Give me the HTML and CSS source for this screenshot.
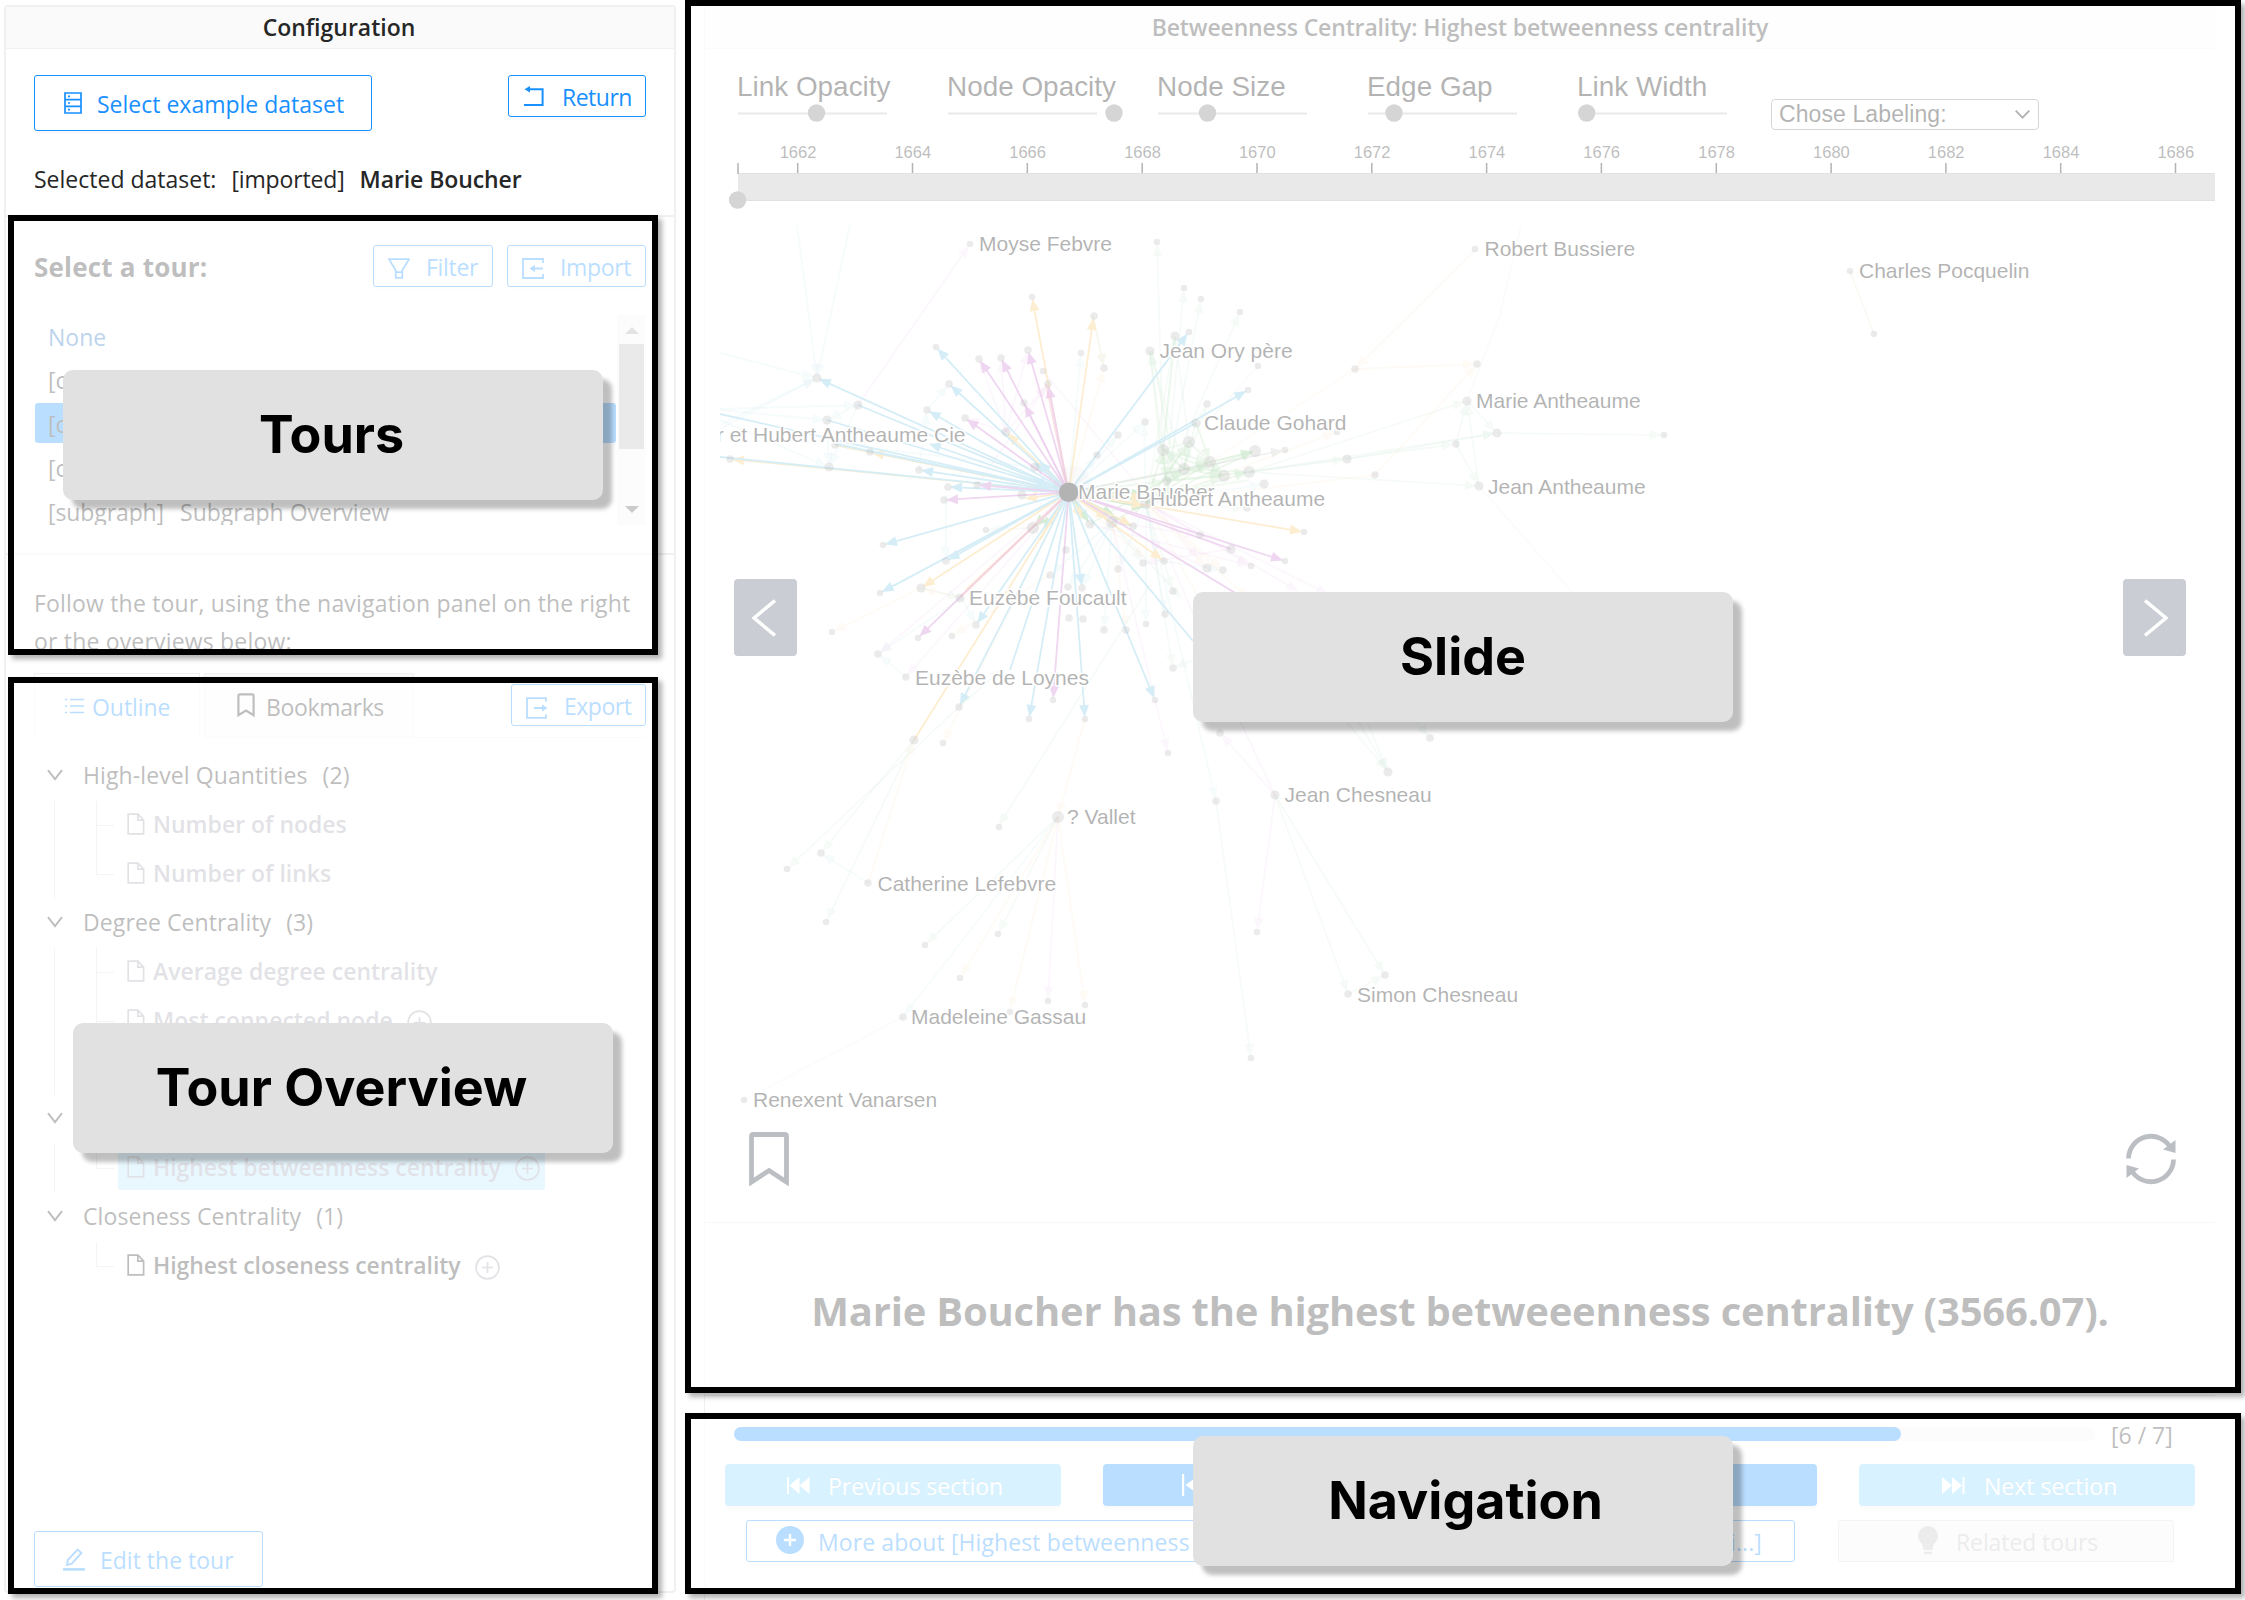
FILE: index.html
```html
<!DOCTYPE html>
<html lang="en">
<head>
<meta charset="utf-8">
<title>Network tour</title>
<link rel="stylesheet" href="styles.css">
</head>
<body>
<svg class="defs" width="0" height="0">
  <symbol id="i-file" viewBox="0 0 18 22"><path d="M1.2 1.2H11L16.6 7V20.8H1.2ZM10.8 1.5V7.2H16.4" fill="none" stroke="currentColor" stroke-width="1.7"/></symbol>
  <symbol id="i-plus" viewBox="0 0 25 25"><g fill="none" stroke="currentColor"><circle cx="12.5" cy="12.5" r="11.4" stroke-width="1.7"/><path d="M12.5 7V18M7 12.5H18" stroke-width="1.7"/></g></symbol>
  <symbol id="i-chev" viewBox="0 0 16 12"><path d="M1 1.2L8 10.2L15 1.2" fill="none" stroke="currentColor" stroke-width="1.9"/></symbol>
  <symbol id="i-mark" viewBox="0 0 18 24"><path d="M1.4 22.2V2.8Q1.4 1.4 2.8 1.4H15.2Q16.6 1.4 16.6 2.8V22.2L9 17.6Z" fill="none" stroke="currentColor" stroke-width="2.2"/></symbol>
</svg>
<div class="app">
  <aside class="side">
    <header class="bar">Configuration</header>
    <section class="dataset">
      <div class="row top">
        <button class="btn big"><svg width="18" height="22" viewBox="0 0 18 22"><path d="M1 1H17V21H1ZM1 7.6H17M1 14.3H17M4 4.4H6M4 11H6M4 17.6H6" fill="none" stroke="currentColor" stroke-width="1.7"/></svg><span class="sel">Select example dataset</span></button>
        <button class="btn return"><svg width="20" height="21" viewBox="0 0 20 21"><path d="M4 3.2H18.6V19H0" fill="none" stroke="currentColor" stroke-width="2"/><path d="M0.5 3.2L6 0V6.4Z" fill="currentColor"/></svg><span>Return</span></button>
      </div>
      <p class="current"><span>Selected dataset:</span><span class="kind">[imported]</span><b>Marie Boucher</b></p>
    </section>
    <section class="tours">
      <div class="row">
        <h2>Select a tour:</h2>
        <div class="pair">
          <button class="btn filter"><svg width="22" height="21" viewBox="0 0 22 21"><path d="M1 1.2H21L14.3 12.3V19.8H7.7V12.3ZM7.7 14.2H14.3" fill="none" stroke="currentColor" stroke-width="1.8"/></svg><span>Filter</span></button>
          <button class="btn import"><svg width="22" height="21" viewBox="0 0 22 21"><path d="M21 5V1H1V20H21V16M9 10.5H21" fill="none" stroke="currentColor" stroke-width="1.8"/><path d="M7.5 10.5L13 6.8V14.2Z" fill="currentColor"/></svg><span>Import</span></button>
        </div>
      </div>
      <div class="list">
        <ul>
          <li class="none">None</li>
          <li><span>[c</span></li>
          <li class="on"><span>[c</span></li>
          <li><span>[c</span></li>
          <li><span class="sub">[subgraph]</span><span>Subgraph Overview</span></li>
        </ul>
        <div class="scroll"><i class="up"></i><i class="thumb"></i><i class="down"></i></div>
      </div>
    </section>
    <section class="overview">
      <p>Follow the tour, using the navigation panel on the right<br>or the overviews below:</p>
      <nav class="tabs">
        <div class="tab active"><svg width="19" height="16" viewBox="0 0 19 16"><path d="M0 1.5H2M0 8H2M0 14.5H2M5 1.5H19M5 8H19M5 14.5H19" stroke="currentColor" stroke-width="1.7"/></svg><span>Outline</span></div>
        <div class="tab marks"><svg width="18" height="24"><use href="#i-mark"/></svg><span>Bookmarks</span></div>
        <div class="rest"><button class="btn export"><svg width="22" height="22" viewBox="0 0 22 22"><path d="M20 4.5V1.2H1V20.8H20V17.5M8 11H17" fill="none" stroke="currentColor" stroke-width="1.8"/><path d="M21.5 11L16 7.4V14.6Z" fill="currentColor"/></svg><span>Export</span></button></div>
      </nav>
      <div class="tree">
        <div class="group"><svg width="16" height="12"><use href="#i-chev"/></svg><span>High-level Quantities</span><span>(2)</span></div>
        <div class="kids">
          <div class="leaf"><svg width="18" height="22"><use href="#i-file"/></svg><span>Number of nodes</span></div>
          <div class="leaf last"><svg width="18" height="22"><use href="#i-file"/></svg><span>Number of links</span></div>
        </div>
        <div class="group"><svg width="16" height="12"><use href="#i-chev"/></svg><span>Degree Centrality</span><span>(3)</span></div>
        <div class="kids">
          <div class="leaf"><svg width="18" height="22"><use href="#i-file"/></svg><span>Average degree centrality</span></div>
          <div class="leaf"><svg width="18" height="22"><use href="#i-file"/></svg><span>Most connected node</span><svg class="more" width="25" height="25"><use href="#i-plus"/></svg></div>
          <div class="leaf last"><svg width="18" height="22"><use href="#i-file"/></svg></div>
        </div>
        <div class="group"><svg width="16" height="12"><use href="#i-chev"/></svg></div>
        <div class="kids">
          <div class="leaf last"><div class="hit"><svg width="18" height="22"><use href="#i-file"/></svg><span>Highest betweenness centrality</span><svg class="more" width="25" height="25"><use href="#i-plus"/></svg></div></div>
        </div>
        <div class="group"><svg width="16" height="12"><use href="#i-chev"/></svg><span>Closeness Centrality</span><span>(1)</span></div>
        <div class="kids end">
          <div class="leaf last fresh"><svg width="18" height="22"><use href="#i-file"/></svg><span>Highest closeness centrality</span><svg class="more" width="25" height="25"><use href="#i-plus"/></svg></div>
        </div>
      </div>
      <button class="btn edit"><svg width="22" height="23" viewBox="0 0 22 23"><path d="M4 17L4.8 12L14.6 1.6L18.4 5L8.8 15.6Z" fill="none" stroke="currentColor" stroke-width="1.9"/><path d="M0 21.4H22" stroke="currentColor" stroke-width="2.6"/></svg><span>Edit the tour</span></button>
    </section>
  </aside>

  <main class="main">
    <header class="bar wide">Betweenness Centrality: Highest betweenness centrality</header>
    <div class="controls">
      <label class="slider"><span>Link Opacity</span><svg width="180" height="18"><path d="M0 9.5H149" class="track"/><circle cx="78.5" cy="9" r="8.7"/></svg></label>
      <label class="slider"><span>Node Opacity</span><svg width="180" height="18"><path d="M0 9.5H149" class="track"/><circle cx="166" cy="9" r="8.7"/></svg></label>
      <label class="slider"><span>Node Size</span><svg width="180" height="18"><path d="M0 9.5H149" class="track"/><circle cx="49.5" cy="9" r="8.7"/></svg></label>
      <label class="slider"><span>Edge Gap</span><svg width="180" height="18"><path d="M0 9.5H149" class="track"/><circle cx="26" cy="9" r="8.7"/></svg></label>
      <label class="slider"><span>Link Width</span><svg width="180" height="18"><path d="M0 9.5H149" class="track"/><circle cx="8.7" cy="9" r="8.7"/></svg></label>
      <div class="select"><span>Chose Labeling:</span><svg width="15" height="9" viewBox="0 0 15 9"><path d="M0.7 0.7L7.5 7.6L14.3 0.7" fill="none" stroke="#000" stroke-width="1.9"/></svg></div>
    </div>
    <svg class="timeline" width="1510" height="72" viewBox="705 140 1510 72">
      <rect x="738" y="174" width="1477" height="26"/>
      <path class="ends" d="M738 173.5H2215M738 200.5H2215"/>
      <g id="ticks"></g>
      <circle cx="737.6" cy="200" r="8.7"/>
    </svg>
    <div class="stage">
      <svg class="graph" width="1510" height="1010" viewBox="705 212 1510 1010">
        <defs><clipPath id="area"><rect x="720" y="225" width="1495" height="990"/></clipPath></defs>
        <g clip-path="url(#area)">
          <g id="edges"></g>
          <g id="nodes"></g>
          <g class="names">
            <text x="979" y="251">Moyse Febvre</text>
            <text x="1484.500" y="256">Robert Bussiere</text>
            <text x="1859" y="278">Charles Pocquelin</text>
            <text x="1159.500" y="358">Jean Ory père</text>
            <text x="1204" y="430">Claude Gohard</text>
            <text x="1476" y="408">Marie Antheaume</text>
            <text x="1488" y="494">Jean Antheaume</text>
            <text x="965.500" y="441.500" text-anchor="end">Marie Boucher et Hubert Antheaume Cie</text>
            <text x="1078" y="498.700">Marie Boucher</text>
            <text x="1150" y="506">Hubert Antheaume</text>
            <text x="969" y="605">Euzèbe Foucault</text>
            <text x="915" y="685">Euzèbe de Loynes</text>
            <text x="1067" y="824">? Vallet</text>
            <text x="877.500" y="891">Catherine Lefebvre</text>
            <text x="911" y="1024">Madeleine Gassau</text>
            <text x="753" y="1107">Renexent Vanarsen</text>
            <text x="1284.500" y="801.500">Jean Chesneau</text>
            <text x="1357" y="1002">Simon Chesneau</text>
          </g>
        </g>
      </svg>
      <button class="flip prev"><svg width="24" height="38" viewBox="0 0 24 38"><path d="M23 1.5L2 19L23 36.500" fill="none" stroke="#fff" stroke-width="3.500"/></svg></button>
      <button class="flip next"><svg width="24" height="38" viewBox="0 0 24 38"><path d="M1 1.5L22 19L1 36.500" fill="none" stroke="#fff" stroke-width="3.500"/></svg></button>
      <svg class="pin" width="40" height="54" viewBox="0 0 40 54"><path d="M2.500 50V4.500Q2.500 2.500 4.500 2.500H35.500Q37.500 2.500 37.500 4.500V50L20 38.500Z" fill="none" stroke="currentColor" stroke-width="4.800"/></svg>
      <svg class="sync" width="52" height="52" viewBox="0 0 52 52"><g fill="none" stroke="currentColor" stroke-width="4.800"><path d="M3.500 25.500A22.500 22.500 0 0 1 46 15.500"/><path d="M48.500 26.500A22.500 22.500 0 0 1 6 36.500"/></g><path d="M50.500 7V20L38 16.500ZM1.500 45V32L14 35.500Z" fill="currentColor"/></svg>
    </div>
    <div class="caption">Marie Boucher has the highest betweeenness centrality (3566.07).</div>
    <footer class="nav">
      <div class="progress"><div class="rail"><div class="fill"></div></div><span>[6 / 7]</span></div>
      <div class="steps">
        <button class="step light"><svg width="23" height="17" viewBox="0 0 23 17"><path d="M0 0H2V17H0ZM12.500 0V17L2.500 8.500ZM22.500 0V17L12.500 8.500Z" fill="#fff"/></svg><span>Previous section</span></button>
        <button class="step back"><svg width="23" height="22" viewBox="0 0 23 22"><path d="M0 0H2.200V22H0ZM16 2V20L3.500 11Z" fill="#fff"/></svg></button>
        <button class="step"></button>
        <button class="step light"><svg width="23" height="17" viewBox="0 0 23 17"><path d="M22.500 0H20.500V17H22.500ZM0 0V17L10 8.500ZM10 0V17L20 8.500Z" fill="#fff"/></svg><span>Next section</span></button>
      </div>
      <div class="extra">
        <button class="btn about"><svg width="28" height="28" viewBox="0 0 28 28"><circle cx="14" cy="14" r="14" fill="currentColor"/><path d="M14 8V20M8 14H20" stroke="#fff" stroke-width="2.300"/></svg><span>More about [Highest betweenness</span><span class="tail">i...]</span></button>
        <button class="btn related"><svg width="20" height="28" viewBox="0 0 20 28"><path d="M10 0A10 10 0 0 1 20 10C20 15 15.500 17 15 21V22.500Q15 24 13.500 24H6.500Q5 24 5 22.500V21C4.500 17 0 15 0 10A10 10 0 0 1 10 0ZM6 25.800H14V28H6Z" fill="currentColor"/></svg><span>Related tours</span></button>
      </div>
    </footer>
  </main>

  <div class="frame f-tours"></div>
  <div class="frame f-overview"></div>
  <div class="frame f-slide"></div>
  <div class="frame f-nav"></div>
  <div class="tag t-tours">Tours</div>
  <div class="tag t-overview">Tour Overview</div>
  <div class="tag t-slide">Slide</div>
  <div class="tag t-nav">Navigation</div>
</div>
<script src="graph.js"></script>
</body>
</html>
```
FILE: styles.css
```css
* { box-sizing: border-box; }
body { margin: 0; background: #fff; color: #262626; font: 23px "Open Sans", "Noto Sans", sans-serif; }
svg { display: block; flex: none; }
.defs { position: absolute; }
h2, p, ul { margin: 0; padding: 0; }
button { font: inherit; margin: 0; padding: 0; }
.app { position: relative; width: 2245px; height: 1600px; overflow: hidden; display: grid; grid-template-columns: 672px 1511px; column-gap: 28px; padding: 5px 0 0 4px; }

/* left column */
.side { height: 1588px; border: 2px solid #f0f0f0; border-radius: 4px; }
.bar { height: 42px; line-height: 41px; background: #fafafa; border-bottom: 1px solid #f0f0f0; text-align: center; white-space: nowrap; }
.side .bar { font-weight: 550; font-size: 23px; padding-right: 2px; }
.row { display: flex; justify-content: space-between; align-items: center; }
.row.top { align-items: flex-start; }
.btn { display: flex; align-items: center; height: 42px; background: #fff; border: 1.5px solid #1890ff; border-radius: 3px; color: #1890ff; box-shadow: 0 3px 0 rgba(0,0,0,.02); line-height: 38px; white-space: nowrap; }
.btn span, .step span { padding-top: 2px; }
.dataset { height: 168px; padding: 26px 28px 0; border-bottom: 2px solid #f0f0f0; }
.big { width: 338px; height: 56px; padding-left: 29px; gap: 15px; }
.return { width: 138px; padding-left: 15px; gap: 18px; letter-spacing: -.5px; }
.current { display: flex; line-height: 36px; margin-top: 30px; white-space: nowrap; }
.kind { margin: 0 15px 0 15px; letter-spacing: -.15px; }
.current b { font-weight: 600; letter-spacing: -.08px; }
.tours { height: 338px; padding: 28px 28px 0; border-bottom: 2px solid #f0f0f0; }
h2 { font-size: 26px; font-weight: 700; line-height: 44px; height: 42px; letter-spacing: .2px; }
.pair { display: flex; gap: 14px; }
.filter { width: 120px; padding-left: 14px; gap: 16px; letter-spacing: -.3px; }
.import { width: 139px; padding-left: 14px; gap: 16px; letter-spacing: -.35px; }
.filter svg, .import svg, .export svg { margin-top: 5px; }
.list { display: flex; height: 210px; margin-top: 28px; overflow: hidden; }
.list ul { flex: 1; list-style: none; margin: 0 1px; }
.list li { display: flex; gap: 16px; height: 40px; line-height: 40px; margin-bottom: 4px; padding: 1px 0 0 13px; white-space: nowrap; border-radius: 3px; }
.list .none { color: #206cc0; padding-top: 2px; }
.list .on { background: #1890ff; }
.sub { letter-spacing: -.1px; }
.scroll { width: 29px; background: #f5f5f5; display: flex; flex-direction: column; align-items: center; padding-top: 12px; }
.up { border: 7px solid transparent; border-top: 0; border-bottom: 7px solid #a3a3a3; }
.thumb { width: 25px; height: 105px; margin-top: 10px; background: #b9b9b9; }
.down { border: 7px solid transparent; border-bottom: 0; border-top: 7px solid #505050; margin-top: 57px; }
.overview { padding: 30px 28px 0; }
.overview p { line-height: 37.7px; letter-spacing: .18px; white-space: nowrap; }
.tabs { display: flex; height: 65px; margin-top: 13px; }
.tab { display: flex; align-items: center; flex: none; height: 65px; border: 1px solid #f0f0f0; padding-bottom: 1px; }
.active { width: 166px; border-bottom: 0; padding-left: 30px; gap: 8px; color: #1890ff; font-weight: 500; letter-spacing: -.05px; }
.active span, .marks span { margin-top: 3px; }
.marks { width: 210px; margin-left: 4px; padding-left: 32px; gap: 11px; background: #fafafa; letter-spacing: -.35px; }
.rest { flex: 1; display: flex; justify-content: flex-end; align-items: flex-start; padding-top: 11px; border-bottom: 1px solid #f0f0f0; }
.export { width: 135px; padding-left: 14px; gap: 16px; letter-spacing: -.5px; }
.tree { margin-top: 14px; }
.group { display: flex; align-items: center; height: 49px; padding: 0 0 3px 13px; white-space: nowrap; }
.group svg { margin-right: 20px; color: #262626; }
.group span + span { margin-left: 15px; }
.group span { letter-spacing: .1px; }
.kids { margin-left: 20px; border-left: 1px solid #d9d9d9; }
.kids.end { border-left-color: transparent; }
.leaf { position: relative; display: flex; align-items: center; height: 49px; padding: 0 0 3px 72px; color: #9d9dac; font-weight: 600; letter-spacing: 0; white-space: nowrap; }
.leaf::before { content: ""; position: absolute; left: 41px; top: 0; height: 49px; border-left: 1px solid #d9d9d9; }
.leaf.last::before { height: 25px; }
.leaf::after { content: ""; position: absolute; left: 41px; top: 24px; width: 18px; border-top: 1px solid #d9d9d9; }
.leaf span { margin-left: 8px; }
.leaf .more { margin: 4px 0 0 14px; }
.leaf.fresh { color: #262626; letter-spacing: -.05px; }
.fresh .more { color: #9d9dac; }
.hit { display: flex; align-items: center; flex: none; height: 42px; width: 427px; margin: 3px 0 0 -9px; padding: 0 0 4px 9px; background: #b6e7ff; border-radius: 3px; color: #9a9db0; letter-spacing: -.05px; }
.edit { width: 229px; height: 56px; margin-top: 240px; padding-left: 28px; gap: 15px; }

/* right column */
.main { border-left: 1px solid #f0f0f0; }
.main .bar { margin-top: 2px; width: 1510px; font-weight: 550; font-size: 23px; letter-spacing: -.14px; }
.controls { display: flex; height: 91px; padding: 17px 0 0 33px; font-family: "Liberation Sans", Arial, sans-serif; color: #000; }
.slider { width: 210px; font-size: 27.900px; line-height: 42px; white-space: nowrap; }
.slider span { margin-left: -1px; }
.slider svg { margin: -4px 0 0 -.500px; overflow: visible; }
.track { stroke: #b4b4b4; stroke-width: 2; }
.slider circle, .timeline circle { fill: #727272; }
.select { display: flex; align-items: center; justify-content: space-between; width: 268px; height: 31px; margin: 33px 0 0 -17px; padding: 0 8px 0 7px; border: 1.5px solid #767676; border-radius: 4px; font-size: 23px; letter-spacing: .1px; white-space: nowrap; }
.timeline { overflow: visible; font: 16.500px "Liberation Sans", Arial, sans-serif; text-anchor: middle; }
.timeline rect { fill: #b6b6b6; }
.timeline text { fill: #222; }
.timeline .ends { stroke: #999; stroke-width: 1; }
.tick { stroke: #000; stroke-width: 1.500; }
.stage { position: relative; width: 1510px; height: 1011px; border-bottom: 1px solid #e8e8e8; }
.names { font: 21px "Liberation Sans", Arial, sans-serif; fill: #000; stroke: #fff; stroke-width: 3px; stroke-linejoin: round; paint-order: stroke; }
.flip { position: absolute; top: 367px; width: 63px; height: 77px; border: 0; border-radius: 4px; background: #4f586c; display: flex; align-items: center; justify-content: center; }
.flip.prev { left: 29px; padding-right: 3px; }
.flip.next { left: 1418px; padding-left: 2px; }
.pin { position: absolute; left: 44px; top: 920px; color: #1d2538; }
.sync { position: absolute; left: 1420px; top: 921px; color: #1d2538; }
.caption { width: 1510px; height: 173px; border-bottom: 1px solid #f0f0f0; line-height: 176px; text-align: center; font-size: 40px; font-weight: 700; letter-spacing: -.2px; white-space: nowrap; }
.nav { height: 204px; padding: 26px 0 0 20px; }
.progress { display: flex; align-items: center; height: 24px; padding-left: 9px; white-space: nowrap; }
.progress span { padding-top: 2px; margin-left: -1px; }
.rail { width: 1361px; height: 14px; border-radius: 7px; background: #f5f5f5; margin-right: 17px; }
.fill { width: 1167px; height: 14px; border-radius: 7px; background: #1890ff; }
.steps { display: flex; gap: 42px; margin-top: 18px; }
.step { display: flex; align-items: center; width: 336px; height: 42px; border: 0; border-radius: 4px; background: #1890ff; color: #fff; box-shadow: 0 3px 0 rgba(0,0,0,.04); text-shadow: 0 -1.500px 0 rgba(0,0,0,.12); white-space: nowrap; }
.step.light { background: #7fd3ff; padding-left: 62px; gap: 18px; }
.step.light:last-child { padding-left: 83px; gap: 19px; }
.step.back { padding-left: 79px; }
.extra { display: flex; gap: 43px; margin: 14px 0 0 21px; }
.about { width: 1049px; padding: 0 32px 0 29px; letter-spacing: .1px; }
.about svg { margin: -2px 14px 0 0; }
.about .tail { margin-left: auto; }
.related { width: 336px; padding-left: 79px; gap: 18px; background: #f5f5f5; border-color: #d9d9d9; color: #bfbfbf; letter-spacing: -.1px; }
.related svg { margin-top: -2px; }

/* annotation layer */
.frame { position: absolute; border: 6px solid #000; background: rgba(255,255,255,.7); box-shadow: 4px 4px 5px rgba(0,0,0,.3); }
.f-tours { left: 8px; top: 215px; width: 650px; height: 440px; }
.f-overview { left: 8px; top: 677px; width: 650px; height: 917px; }
.f-slide { left: 685px; top: 0; width: 1556px; height: 1393px; }
.f-nav { left: 685px; top: 1413px; width: 1556px; height: 181px; }
.tag { position: absolute; width: 540px; height: 130px; border-radius: 10px; background: #e1e1e1; color: #000; box-shadow: 9px 9px 4px rgba(0,0,0,.25); font: 700 52px/130px Inter, sans-serif; text-align: center; padding-right: 3px; }
.t-tours { left: 63px; top: 370px; }
.t-overview { left: 73px; top: 1023px; }
.t-slide { left: 1193px; top: 592px; padding-right: 0; }
.t-nav { left: 1193px; top: 1436px; padding: 0 0 0 5px; }
```
FILE: graph.js
```js
const NS = 'http://www.w3.org/2000/svg';
function add(parent, name, attrs, text) {
  const el = document.createElementNS(NS, name);
  for (const k in attrs) el.setAttribute(k, attrs[k]);
  if (text) el.textContent = text;
  document.getElementById(parent).appendChild(el);
}

// Time axis: one labelled tick every two years.
add('ticks', 'path', { d: 'M738 163V174', class: 'tick' });
for (let i = 0; i < 13; i++) {
  const x = (797.7 + i * 114.82).toFixed(1);
  add('ticks', 'path', { d: `M${x} 163V173`, class: 'tick' });
  add('ticks', 'text', { x: +x + 0.3, y: 157.7 }, String(1662 + i * 2));
}

// Edge groups: colour, opacity, arrow, then "x1 y1 x2 y2" per edge; C is the hub.
const C = '1068.7 492.3';
const groups = [
  ['#8cc8dc', 0.28, 1, `C 1081 353;C 1144.700 422;C 1118 435;C 1096.700 455;1146 503 1144 422;1112 522 1050 575;1112 522 1068 587;1112 522 1104 630;1112 522 1082 588;1112 522 1143 563;1146 503 1146 624;1146 503 1165 614;1146 503 1118 569;1146 503 1264 484;1035 467 835 444;927 410 949 384;919 470 927 410;906 677 878 654;962 598 976 625;720 353 817 378;797 225 817 378;858 405 827 420;858 405 829 467;720 409 858 405;720 425 817 378;720 420 829 467;850 225 817 378;720 410 827 420;1146 503 1216 801;1156 560 1223 570;946 495 946 561;868 883 821 853;720 429 817 378;827 420 829 467;1058 817 903 1017;962 598 878 654`],
  ['#8ccaa4', 0.26, 1, `1163 450 1157 242;1163 450 1150 351;1163 450 1175 336;1166 481 1184 288;1166 481 1201 299;1166 481 1240 312;1184 469 1163 450;1146 503 1175 336;1184 469 1150 351;1189 442 1175 336;1184 469 1207 404;1249 472 1347 459;1249 472 1467 401;1249 472 1479 486;1249 472 1456 444;1347 459 1497 433;1249 472 1497 433;1456 444 1467 401;1456 444 1479 486;1467 401 1497 433;1479 486 1467 401;1497 433 1664 435;1093 316 1104 368;1146 503 1247 508;1146 503 1173 591;1146 503 1173 668;1112 522 1183 600;959 707 787 869;914 740 826 922;914 740 821 853;1150 585 998 827;1058 817 925 945;1058 817 998 934;1275 795 1348 994;1275 795 1385 975;1348 994 1385 975;1320 690 1388 772;1340 690 1388 772;1350 680 1388 772;1390 690 1430 738;1220 650 1173 668;1216 801 1251 1058;1033 528 986 530;921 588 962 598;959 707 1003 668`],
  ['#8ccaa4', 0.16, 0, `903 1017 744 1100;1467 401 1500 315;1500 315 1521 225;1479 486 1572 592;1258 366 1190 442;1850 271 1874 334`],
  ['#f4c07c', 0.26, 1, `1093 316 1104 368;C 1104 368;1475 250 1355 369;1355 369 1477 364;1375 475 1477 364;1146 503 1337 432;1146 503 1207 568;1146 503 1223 570;921 588 832 632;962 598 921 588;C 943 743;868 883 914 740;1112 522 1126 630;1085 719 1058 817;1058 817 960 978;1058 817 1010 1011;1058 817 1085 1005;1050 575 952 636;1146 503 1222 640;1146 503 1250 600;C 962 598;C 1146 560`],
  ['#f4c07c', 0.2, 0, `1146 503 1355 369;1146 503 1375 475;1850 271 1874 334`],
  ['#d890dc', 0.25, 1, `858 405 970 244;1006 432 979 359;1006 432 1001 358;1006 432 1028 350;1006 432 1048 384;1006 432 965 418;1043 371 1200 560;977 485 1048 384;C 906 677;C 878 654;1146 503 1251 566;1231 549 1143 563;1146 503 1300 592;1146 503 1330 595;1207 568 1146 540;1275 795 1220 733;1275 795 1230 700;1275 795 1257 932;1155 700 1168 753;1058 817 1048 1001;1112 522 1155 700;1090 524 1251 566;1170 560 1230 700;1112 522 1200 535`],
  ['#68bc68', 0.38, 1, `1146 503 1163 450;1146 503 1189 442;1146 503 1184 469;1146 503 1210 462;1146 503 1255 451;1146 503 1249 472;1146 503 1224 476;1184 469 1210 462;1163 450 1224 476;1184 469 1255 451;1166 481 1255 451;1166 481 1210 462;1189 442 1224 476;1166 481 1249 472;1163 450 1166 481;1210 462 1255 451;1184 469 1189 442;1184 469 1224 476;1163 450 1210 462;1112 522 1146 503;1090 524 1184 469;C 1166 481;C 1184 469;1166 481 1163 450;1184 469 1163 450;1196 423 1210 462`],
  ['#6cc46c', 0.3, 0, `1163 450 1189 442;1166 481 1224 476;1184 469 1249 472;1156 495 1249 480;1160 440 1170 500;1175 440 1166 500;1150 351 1160 445;1152 351 1170 445;1150 500 1190 440;1175 336 1163 450;1196 423 1184 469`],
  ['#777777', 0.36, 1, `C 1285 450`],
  ['#48b048', 0.75, 1, `C 1033 528;C 1042 531;C 1090 524;C 1133 527;C 1146 494;C 1146 500;C 1146 508;C 1116 516`],
  ['#f8c05c', 0.95, 1, `C 1032 297;C 1093.700 316;C 730 459;C 870 452;C 921 588;C 1164 561;C 1304 532;C 1006 432;C 1023 487;C 1023 499;C 1083 521;C 1133 526;C 1146 498;C 1146 506;C 1110 520`],
  ['#f8c05c', 0.95, 0, `C 914 740;C 966 590;C 1040 540;C 835 445`],
  ['#74c4e1', 1, 1, `C 936 347;C 949 384;C 817 378;C 927 410;C 927 443;C 919 470;C 948 487;C 883 545;C 946 561;C 880 593;C 976 625;C 959 707;C 1029 719;C 1085 719;C 1082 588;C 1155 700;C 1188.800 332;C 1248 390;C 1030 478;C 1033 462;C 1038 460`],
  ['#74c4e1', 1, 0, `C 720 414;C 858 405;C 827 420;C 720 457;C 1196 423;C 1010 670;C 1193 641;C 835 444;C 870 451;C 946 558`],
  ['#c66acb', 0.92, 1, `C 979 359;C 1001 358;C 1028 350;C 1048 384;C 1024 403;C 965 418;C 977 485;C 944 500;C 918 638;C 1053 700;C 1285 561`],
  ['#c66acb', 0.92, 0, `C 1231 549;C 1300 632`],
  ['#e0607a', 0.6, 0, `1068 494 960 597;1068 492 1046 384`],
];
for (const [color, opacity, arrow, list] of groups) {
  for (const item of list.split(';')) {
    const [x1, y1, x2, y2] = item.replace('C', C).trim().split(/\s+/).map(Number);
    const d = Math.hypot(x2 - x1, y2 - y1), ux = (x2 - x1) / d, uy = (y2 - y1) / d;
    const a = arrow ? 13 : 0;
    add('edges', 'path', { d: `M${x1} ${y1}L${x2 - ux * a} ${y2 - uy * a}`, stroke: color, 'stroke-opacity': opacity, 'stroke-width': 1.8 });
    if (arrow) {
      const tx = x2 - ux * 2, ty = y2 - uy * 2, bx = x2 - ux * 14, by = y2 - uy * 14;
      add('edges', 'path', { d: `M${tx} ${ty}L${bx - uy * 5} ${by + ux * 5}L${bx + uy * 5} ${by - ux * 5}Z`, fill: color, 'fill-opacity': opacity });
    }
  }
}

// Nodes grouped by radius.
const nodes = {
  3.3: '970 244,1032 297,1157 242,936 347,1081 353,1043 371,986 530,883 545,880 593,1184 288,1201 299,1240 312,1189 332,1258 366,1248 390,1285 450,1664 435,1304 532,1337 432,1285 561,1251 566,1475 249,1850 271,1874 334,832 632,918 638,952 636,943 743,1029 719,1053 700,1085 719,1155 700,1168 753,787 869,826 922,999 827,925 945,998 934,960 978,1010 1012,1048 1001,1085 1005,744 1100,1257 932,1251 1058,1146 624',
  3.8: '979 359,1001 358,1028 350,1048 384,949 384,927 410,965 418,1024 403,1094 316,1104 368,1145 422,1118 435,1097 455,835 445,870 452,730 459,919 470,948 487,944 500,977 485,946 561,976 625,1066 550,1050 575,1068 587,1082 588,1069 618,1083 619,1118 569,1143 563,1164 561,1173 591,1165 614,1133 526,1207 404,1375 475,1355 369,1477 364,1456 444,1247 508,1223 570,1200 535,878 654,906 677,959 707,1104 630,1126 630,1173 668,1216 801,821 853,868 883,903 1017,1430 738,1348 994,1385 975,1220 733',
  4.6: '817 378,858 405,827 420,829 467,921 588,960 598,1022 495,1035 467,1090 524,1175 336,1150 351,1196 423,1467 401,1497 433,1479 486,1347 459,1264 484,1231 549,1207 568,1006 432,914 740,1275 795,1388 772,1167 481',
  6: '1058 817,1189 442,1224 476,1255 451,1163 450,1249 472,1033 528,1112 522,1210 462,1184 469,1146 503'
};
for (const r in nodes) {
  for (const p of nodes[r].split(',')) {
    const [x, y] = p.split(' ');
    add('nodes', 'circle', { cx: x, cy: y, r: +r, fill: '#000', 'fill-opacity': 0.26 });
  }
}
add('nodes', 'circle', { cx: 1073, cy: 485, r: 19, fill: '#000', 'fill-opacity': 0.06 });
add('nodes', 'circle', { cx: 1068.7, cy: 492.3, r: 9.8, fill: '#000' });
```
